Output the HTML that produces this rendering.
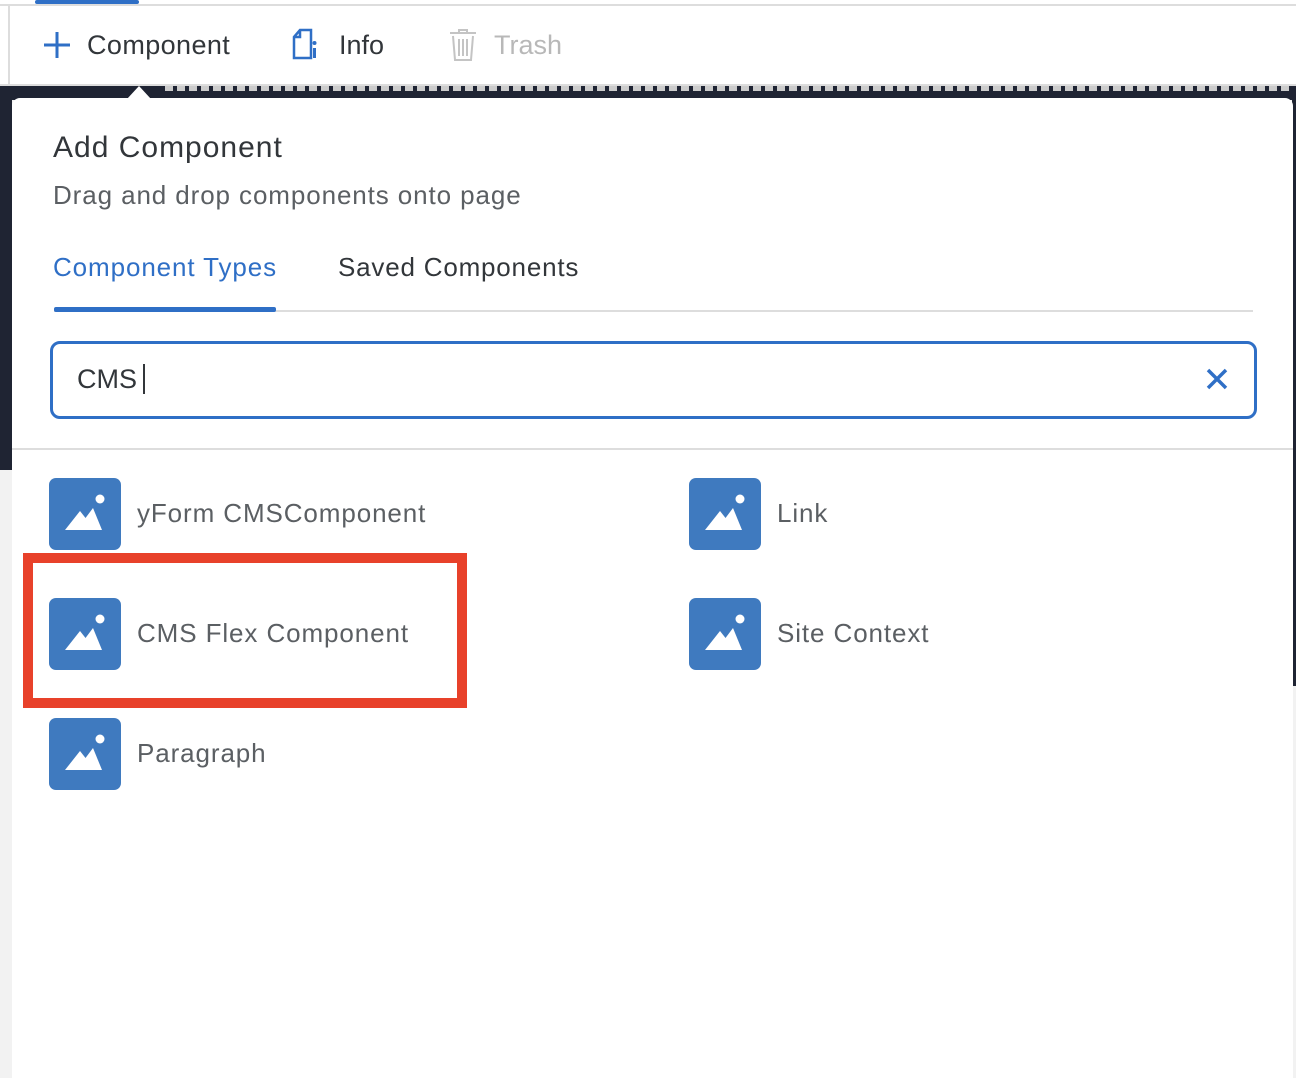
<!DOCTYPE html>
<html><head><style>
body{margin:0;width:1296px;height:1068px;position:relative;overflow:hidden;background:#f2f2f2;font-family:"Liberation Sans",Arial,sans-serif;}
.a{position:absolute}
.ic{position:absolute;width:72px;height:72px;background:#3f7abf;border-radius:7px}
.lab{position:absolute;font-size:26px;color:#5b5f63;letter-spacing:0.9px}
</style></head><body>
<div class="a" style="left:0;top:0;width:1296px;height:86px;background:#fff"></div>
<div class="a" style="left:35px;top:0;width:104px;height:4px;background:#2f6fc6;border-radius:2px"></div>
<div class="a" style="left:0;top:4px;width:1296px;height:2px;background:#ddd"></div>
<div class="a" style="left:8px;top:6px;width:2px;height:80px;background:#ddd"></div>
<div class="a" style="left:0;top:84px;width:1296px;height:2px;background:#ddd"></div>
<svg class="a" style="left:42px;top:31px" width="30" height="30"><path d="M15 1V27M2 14H28" stroke="#2f6fc6" stroke-width="3"/></svg>
<div class="a" style="left:87px;top:30px;font-size:27px;color:#32363a;letter-spacing:0.4px">Component</div>
<svg class="a" style="left:292px;top:28px" width="34" height="36"><path d="M8 2H19V30H2V9Z M2 9H8V2" fill="none" stroke="#2f6fc6" stroke-width="2.5"/><rect x="21" y="20" width="3" height="10" fill="#2f6fc6"/><circle cx="22.5" cy="15" r="2" fill="#2f6fc6"/></svg>
<div class="a" style="left:339px;top:30px;font-size:27px;color:#32363a">Info</div>
<svg class="a" style="left:448px;top:28px" width="30" height="34"><path d="M2 5H28M11 5V2H19V5M5 8L7 32H23L25 8M11 11V28M15 11V28M19 11V28" fill="none" stroke="#c4c4c4" stroke-width="2"/></svg>
<div class="a" style="left:494px;top:30px;font-size:27px;color:#b8b8b8">Trash</div>
<div class="a" style="left:0;top:86px;width:1296px;height:14px;background:#1f2433"></div>
<div class="a" style="left:165px;top:86px;width:1131px;height:5px;background:repeating-linear-gradient(90deg,#ccc 0 8px,#1f2433 8px 12px)"></div>
<div class="a" style="left:0;top:86px;width:12px;height:384px;background:#1f2433"></div>
<div class="a" style="left:1292px;top:86px;width:4px;height:600px;background:#1f2433"></div>
<div class="a" style="left:12px;top:98px;width:1281px;height:980px;background:#fff;border-radius:8px 8px 0 0"></div>
<div class="a" style="left:127px;top:86px;width:0;height:0;border-left:12px solid transparent;border-right:12px solid transparent;border-bottom:13px solid #fff"></div>
<div class="a" style="left:53px;top:131px;font-size:30px;color:#32363a;letter-spacing:1px">Add Component</div>
<div class="a" style="left:53px;top:180px;font-size:26px;color:#5b5f63;letter-spacing:0.9px">Drag and drop components onto page</div>
<div class="a" style="left:53px;top:252px;font-size:26px;color:#2f6fc6;letter-spacing:0.9px">Component Types</div>
<div class="a" style="left:338px;top:252px;font-size:26px;color:#32363a;letter-spacing:0.8px">Saved Components</div>
<div class="a" style="left:54px;top:310px;width:1199px;height:2px;background:#ddd"></div>
<div class="a" style="left:54px;top:307px;width:222px;height:5px;background:#2f6fc6;border-radius:2px"></div>
<div class="a" style="left:50px;top:341px;width:1201px;height:72px;border:3px solid #2f6fc6;border-radius:10px"></div>
<div class="a" style="left:77px;top:364px;font-size:27px;color:#32363a">CMS</div>
<div class="a" style="left:143px;top:364px;width:2px;height:30px;background:#32363a"></div>
<svg class="a" style="left:1205px;top:367px" width="24" height="24"><path d="M3 3L21 21M21 3L3 21" stroke="#2f6fc6" stroke-width="3.5"/></svg>
<div class="a" style="left:12px;top:448px;width:1281px;height:2px;background:#ddd"></div>
<svg width="0" height="0" style="position:absolute"><defs><g id="m"><circle cx="51" cy="21" r="4.5" fill="#fff"/><path d="M16 52L31 33L46 52Z" fill="#fff"/><path d="M35 42L44 30L53 52H42Z" fill="#fff"/></g></defs></svg>
<div class="ic" style="left:49px;top:478px"><svg width="72" height="72"><use href="#m"/></svg></div>
<div class="lab" style="left:137px;top:498px">yForm CMSComponent</div>
<div class="ic" style="left:689px;top:478px"><svg width="72" height="72"><use href="#m"/></svg></div>
<div class="lab" style="left:777px;top:498px">Link</div>
<div class="ic" style="left:49px;top:598px"><svg width="72" height="72"><use href="#m"/></svg></div>
<div class="lab" style="left:137px;top:618px">CMS Flex Component</div>
<div class="ic" style="left:689px;top:598px"><svg width="72" height="72"><use href="#m"/></svg></div>
<div class="lab" style="left:777px;top:618px">Site Context</div>
<div class="ic" style="left:49px;top:718px"><svg width="72" height="72"><use href="#m"/></svg></div>
<div class="lab" style="left:137px;top:738px">Paragraph</div>
<div class="a" style="left:23px;top:553px;width:424px;height:135px;border:10px solid #e8412a"></div>
</body></html>
